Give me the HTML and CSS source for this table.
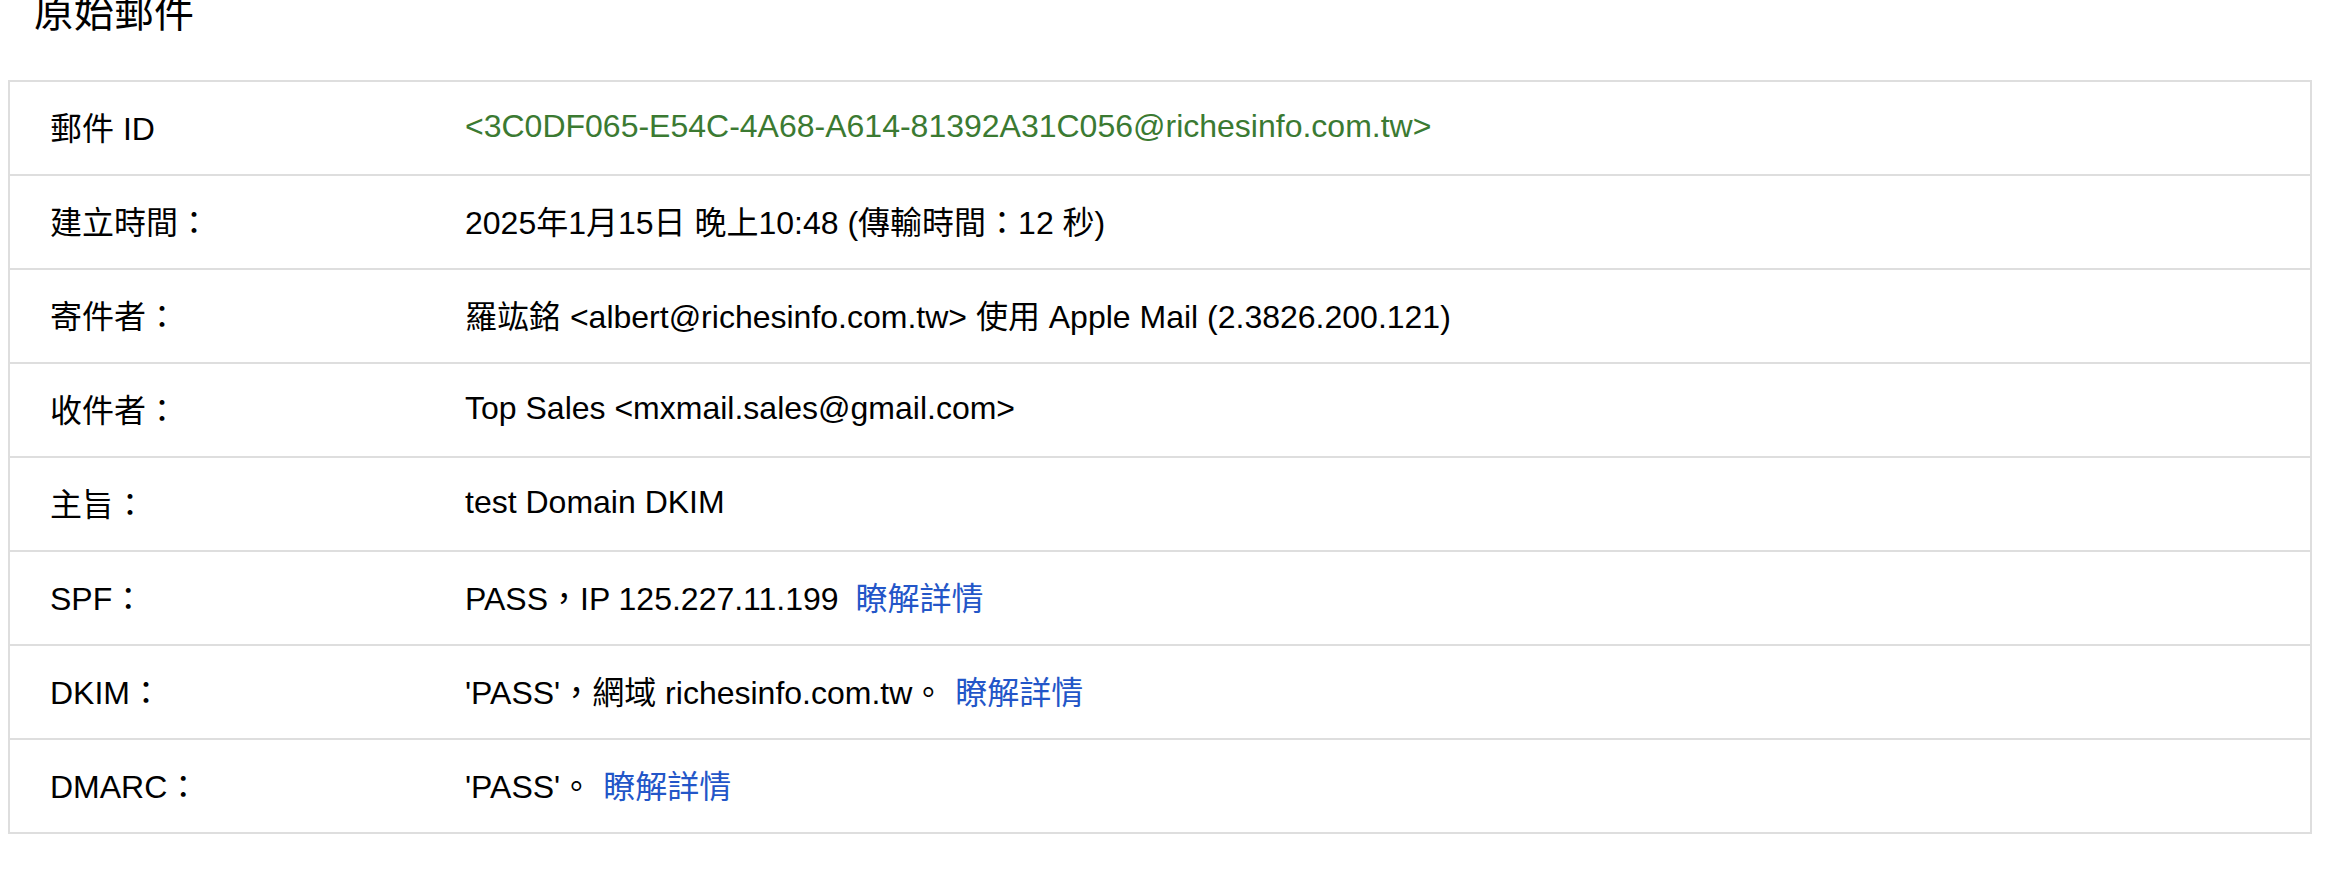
FILE: index.html
```html
<!DOCTYPE html>
<html lang="zh-Hant">
<head>
    <meta charset="UTF-8">
    <meta name="viewport" content="width=device-width, initial-scale=1.0">
    <title>原始郵件</title>
    <link rel="stylesheet" href="styles.css">
</head>
<body>
    <div class="container">
        <h1 class="title">原始郵件</h1>
        <div class="info">
            <div class="row">
                <div class="label">郵件 ID</div>
                <div class="value msg-id">&lt;3C0DF065-E54C-4A68-A614-81392A31C056@richesinfo.com.tw&gt;</div>
            </div>
            <div class="row">
                <div class="label">建立時間：</div>
                <div class="value">2025年1月15日 晚上10:48 (傳輸時間：12 秒)</div>
            </div>
            <div class="row">
                <div class="label">寄件者：</div>
                <div class="value">羅竑銘 &lt;albert@richesinfo.com.tw&gt; 使用 Apple Mail (2.3826.200.121)</div>
            </div>
            <div class="row">
                <div class="label">收件者：</div>
                <div class="value">Top Sales &lt;mxmail.sales@gmail.com&gt;</div>
            </div>
            <div class="row">
                <div class="label">主旨：</div>
                <div class="value">test Domain DKIM</div>
            </div>
            <div class="row">
                <div class="label">SPF：</div>
                <div class="value">PASS，IP 125.227.11.199 <a class="more" href="#">瞭解詳情</a></div>
            </div>
            <div class="row">
                <div class="label">DKIM：</div>
                <div class="value">'PASS'，網域 richesinfo.com.tw。<a class="more tight" href="#">瞭解詳情</a></div>
            </div>
            <div class="row">
                <div class="label">DMARC：</div>
                <div class="value">'PASS'。<a class="more tight" href="#">瞭解詳情</a></div>
            </div>
        </div>
    </div>
</body>
</html>
```

FILE: styles.css
```css
body {
  margin: 0;
  font-family: "Liberation Sans", Arial, "Noto Sans CJK TC", sans-serif;
  color: #000;
  background: #fff;
}

.container {
  padding: 0 18px 0 8px;
}

.title {
  margin: -7px 0 47px 26px;
  font-size: 40px;
  line-height: 40px;
  font-weight: normal;
}

.info {
  border: 2px solid #dedede;
}

.row {
  display: grid;
  grid-template-columns: 455px 1fr;
  align-items: center;
  height: 92px;
  font-size: 32px;
}

.row + .row {
  border-top: 2px solid #dedede;
}

.label,
.value {
  margin-bottom: 4px;
}

.label {
  padding-left: 40px;
}

.msg-id {
  color: #3b7a32;
}

.more {
  color: #2356c8;
  text-decoration: none;
  margin-left: 8px;
}

.more.tight {
  margin-left: 11px;
}
```
